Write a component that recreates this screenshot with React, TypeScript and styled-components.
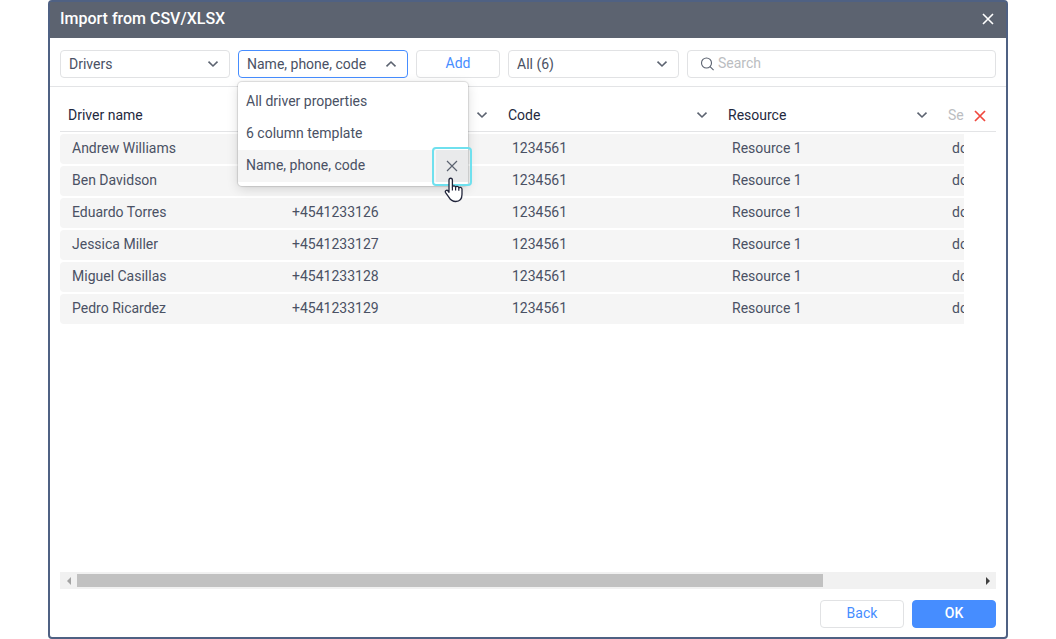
import React, { useState } from "react";
import styled, { createGlobalStyle } from "styled-components";

const GlobalStyle = createGlobalStyle`
  *, *::before, *::after { box-sizing: border-box; }
  body {
    margin: 0;
    background: #fff;
    color: #4a5164;
    font: 14px/20px Roboto, "Liberation Sans", sans-serif;
  }
  button, input, select { font: inherit; color: inherit; margin: 0; }
`;

const Dialog = styled.section`
  display: flex;
  flex-direction: column;
  min-height: 100vh;
  margin: 0 48px;
  border: 2px solid #4f6183;
  border-radius: 4px;
  background: #fff;
`;

const TitleBar = styled.header`
  display: flex;
  align-items: center;
  justify-content: space-between;
  height: 36px;
  padding: 0 10px 2px;
  background: #5c6370;
  color: #fff;
`;

const Title = styled.h1`
  margin: 0;
  font-size: 16px;
  line-height: 20px;
  font-weight: 500;
`;

const IconButton = styled.button<{ $color: string; $size: number }>`
  display: flex;
  align-items: center;
  justify-content: center;
  width: ${(p) => p.$size}px;
  height: ${(p) => p.$size}px;
  padding: 0;
  border: 0;
  background: none;
  color: ${(p) => p.$color};
  cursor: pointer;
`;

const Toolbar = styled.div`
  display: flex;
  gap: 8px;
  padding: 12px 10px 8px;
  border-bottom: 1px solid #e3e4e6;
`;

const Field = styled.div<{ $width?: number }>`
  position: relative;
  display: grid;
  flex: none;
  width: ${(p) => p.$width ?? 170}px;
  align-items: center;
  & > svg {
    grid-area: 1 / 1;
    justify-self: end;
    margin-right: 11px;
    pointer-events: none;
  }
`;

const Select = styled.select<{ $open?: boolean }>`
  grid-area: 1 / 1;
  appearance: none;
  width: 100%;
  height: 28px;
  padding: 0 28px 0 8px;
  border: 1px solid ${(p) => (p.$open ? "#468dff" : "#e1e2e4")};
  border-radius: 4px;
  background: #fff;
  outline: none;
`;

const Button = styled.button<{ $primary?: boolean }>`
  flex: none;
  width: 84px;
  height: 28px;
  padding: 0 0 2px;
  border: 1px solid ${(p) => (p.$primary ? "#468dff" : "#e1e2e4")};
  border-radius: 4px;
  background: ${(p) => (p.$primary ? "#468dff" : "#fff")};
  color: ${(p) => (p.$primary ? "#fff" : "#468dff")};
  font-weight: ${(p) => (p.$primary ? 500 : 400)};
  cursor: pointer;
`;

const SearchBox = styled.label`
  display: flex;
  flex: 1;
  min-width: 0;
  align-items: center;
  gap: 4px;
  height: 28px;
  padding: 0 12px;
  border: 1px solid #e1e2e4;
  border-radius: 4px;
`;

const SearchInput = styled.input`
  flex: 1;
  min-width: 0;
  height: 24px;
  padding: 0 0 2px;
  border: 0;
  outline: none;
  background: none;
  &::placeholder { color: #bbbdc1; opacity: 1; }
`;

const Menu = styled.ul`
  position: absolute;
  z-index: 2;
  top: 32px;
  left: 0;
  width: 230px;
  margin: 0;
  padding: 4px 0;
  list-style: none;
  background: #fff;
  border-radius: 4px;
  box-shadow: 0 0 1px 1px rgba(0, 0, 0, 0.12), 0 3px 12px rgba(0, 0, 0, 0.14);
`;

const MenuItem = styled.li<{ $active: boolean }>`
  display: flex;
  align-items: center;
  justify-content: space-between;
  height: 32px;
  padding-left: 8px;
  background: ${(p) => (p.$active ? "#f5f5f5" : "#fff")};
  cursor: pointer;
`;

const MenuLabel = styled.span`
  padding-bottom: 2px;
`;

const RemoveButton = styled.button`
  position: relative;
  display: flex;
  align-items: center;
  justify-content: center;
  width: 32px;
  height: 32px;
  padding: 0;
  border: 0;
  background: #e9eaeb;
  color: #5c6370;
  cursor: pointer;
`;

const FocusRing = styled.span`
  position: absolute;
  inset: -3px -4px -4px;
  border: 2px solid #6fe0ee;
  border-radius: 4px;
`;

const Pointer = styled.svg`
  position: absolute;
  top: 27px;
  left: 8px;
`;

const Content = styled.div`
  display: flex;
  flex: 1;
  min-height: 0;
  padding: 11px 10px 0;
`;

const Viewport = styled.div`
  flex: 1;
  min-width: 0;
  overflow: hidden;
`;

const Table = styled.table`
  width: 1174px;
  table-layout: fixed;
  border-collapse: separate;
  border-spacing: 0 2px;
`;

const HeadCell = styled.th<{ $muted?: boolean }>`
  height: 32px;
  padding: 0 12px 2px 8px;
  border-bottom: 1px solid #e3e4e6;
  color: ${(p) => (p.$muted ? "#bbbdc1" : "#1f2940")};
  font-weight: 400;
  text-align: left;
`;

const HeadInner = styled.div`
  display: flex;
  align-items: center;
  justify-content: space-between;
  & > svg { color: #5c6370; }
`;

const Cell = styled.td`
  height: 30px;
  padding: 0 12px 2px;
  background: #f5f5f5;
  white-space: nowrap;
  &:first-child { border-radius: 4px 0 0 4px; }
`;

const SideHead = styled.div`
  display: flex;
  flex: none;
  align-items: center;
  justify-content: center;
  width: 32px;
  height: 32px;
  margin-top: 2px;
  border-bottom: 1px solid #e3e4e6;
`;

const ScrollTrack = styled.div`
  display: flex;
  align-items: center;
  height: 17px;
  margin: 0 10px;
  background: #f1f1f1;
`;

const ScrollArrow = styled.button`
  display: flex;
  flex: none;
  align-items: center;
  justify-content: center;
  width: 17px;
  height: 17px;
  padding: 0;
  border: 0;
  background: none;
`;

const ScrollLane = styled.div`
  flex: 1;
`;

const ScrollThumb = styled.div`
  width: 82.7%;
  height: 13px;
  background: #c1c1c1;
`;

const Footer = styled.footer`
  display: flex;
  justify-content: flex-end;
  gap: 8px;
  padding: 11px 10px 9px;
`;

const Chevron = ({ up = false }: { up?: boolean }) => (
  <svg width="12" height="8" viewBox="0 0 12 8" fill="none" stroke="#5c6370" strokeWidth="1.6" aria-hidden="true">
    <path d={up ? "M1.500 6.300 6 2l4.500 4.300" : "M1.500 1.700 6 6l4.500-4.300"} />
  </svg>
);

const Cross = ({ size, weight }: { size: number; weight: number }) => (
  <svg width={size} height={size} viewBox="0 0 12 12" fill="none" stroke="currentColor" strokeWidth={weight} aria-hidden="true">
    <path d="M1 1 11 11M11 1 1 11" />
  </svg>
);

const templates = ["All driver properties", "6 column template", "Name, phone, code"];
const columns = ["Driver name", "Phone", "Code", "Resource"];
const drivers = [
  ["Andrew Williams", "+4541233124"],
  ["Ben Davidson", "+4541233125"],
  ["Eduardo Torres", "+4541233126"],
  ["Jessica Miller", "+4541233127"],
  ["Miguel Casillas", "+4541233128"],
  ["Pedro Ricardez", "+4541233129"],
];

export default function App() {
  const [open, setOpen] = useState(true);
  const [template, setTemplate] = useState(templates[2]);

  return (
    <>
      <GlobalStyle />
      <Dialog role="dialog" aria-labelledby="dialog-title">
        <TitleBar>
          <Title id="dialog-title">Import from CSV/XLSX</Title>
          <IconButton $color="#fff" $size={16} aria-label="Close">
            <Cross size={12} weight={1.6} />
          </IconButton>
        </TitleBar>

        <Toolbar>
          <Field>
            <Select aria-label="Object type">
              <option>Drivers</option>
            </Select>
            <Chevron />
          </Field>
          <Field>
            <Select
              aria-label="Template"
              $open={open}
              value={template}
              onChange={(e) => setTemplate(e.target.value)}
              onMouseDown={(e) => {
                e.preventDefault();
                setOpen(!open);
              }}
            >
              {templates.map((name) => (
                <option key={name}>{name}</option>
              ))}
            </Select>
            <Chevron up={open} />
            {open && (
              <Menu>
                {templates.map((name) => (
                  <MenuItem key={name} $active={name === template} onClick={() => setTemplate(name)}>
                    <MenuLabel>{name}</MenuLabel>
                    {name === template && (
                      <RemoveButton aria-label={`Remove ${name}`}>
                        <Cross size={12} weight={1.2} />
                        <FocusRing />
                        <Pointer width="20" height="26" viewBox="0 0 20 26" aria-hidden="true">
                          <path
                            d="M5 3.2C5 .6 8.4.6 8.4 3.2V10c.3-1.800 3.200-1.500 3.200.4.500-1.500 3.100-1.200 3.200.7.700-1.300 3.200-.8 3.200 1.200v5c0 4.500-2.300 7.200-6.300 7.200-3.700 0-5.300-1.700-6.700-4.100L1.600 15.600C.6 13.700 2.900 12.400 4.100 14l.9 1.300z"
                            fill="#fff"
                            stroke="#20243a"
                            strokeWidth="1.3"
                            strokeLinejoin="round"
                          />
                          <path d="M8.400 10v3.500M11.600 10.500v3M14.800 11.200v2.500" fill="none" stroke="#20243a" strokeWidth="1.2" />
                        </Pointer>
                      </RemoveButton>
                    )}
                  </MenuItem>
                ))}
              </Menu>
            )}
          </Field>
          <Button>Add</Button>
          <Field $width={171}>
            <Select aria-label="Row filter">
              <option>All (6)</option>
            </Select>
            <Chevron />
          </Field>
          <SearchBox>
            <svg width="14" height="14" viewBox="0 0 14 14" fill="none" stroke="#5c6370" strokeWidth="1.1" aria-hidden="true">
              <circle cx="6.500" cy="6" r="5" />
              <path d="m10 9.600 3.600 3.600" />
            </svg>
            <SearchInput type="search" placeholder="Search" aria-label="Search" />
          </SearchBox>
        </Toolbar>

        <Content>
          <Viewport>
            <Table>
              <colgroup>
                {columns.map((name) => (
                  <col key={name} style={{ width: 220 }} />
                ))}
                <col />
              </colgroup>
              <thead>
                <tr>
                  {columns.map((name) => (
                    <HeadCell key={name} scope="col">
                      <HeadInner>
                        {name}
                        {name !== "Driver name" && <Chevron />}
                      </HeadInner>
                    </HeadCell>
                  ))}
                  <HeadCell scope="col" $muted>Select</HeadCell>
                </tr>
              </thead>
              <tbody>
                {drivers.map(([name, phone]) => (
                  <tr key={name}>
                    <Cell>{name}</Cell>
                    <Cell>{phone}</Cell>
                    <Cell>1234561</Cell>
                    <Cell>Resource 1</Cell>
                    <Cell>doc</Cell>
                  </tr>
                ))}
              </tbody>
            </Table>
          </Viewport>
          <SideHead>
            <IconButton $color="#f0483e" $size={16} aria-label="Remove column">
              <Cross size={12} weight={1.7} />
            </IconButton>
          </SideHead>
        </Content>

        <ScrollTrack>
          <ScrollArrow aria-label="Scroll left">
            <svg width="4" height="8" viewBox="0 0 4 8" fill="#a3a3a3"><path d="M4 0v8L0 4z" /></svg>
          </ScrollArrow>
          <ScrollLane>
            <ScrollThumb />
          </ScrollLane>
          <ScrollArrow aria-label="Scroll right">
            <svg width="4" height="8" viewBox="0 0 4 8" fill="#404040"><path d="M0 0v8l4-4z" /></svg>
          </ScrollArrow>
        </ScrollTrack>

        <Footer>
          <Button>Back</Button>
          <Button $primary>OK</Button>
        </Footer>
      </Dialog>
    </>
  );
}
